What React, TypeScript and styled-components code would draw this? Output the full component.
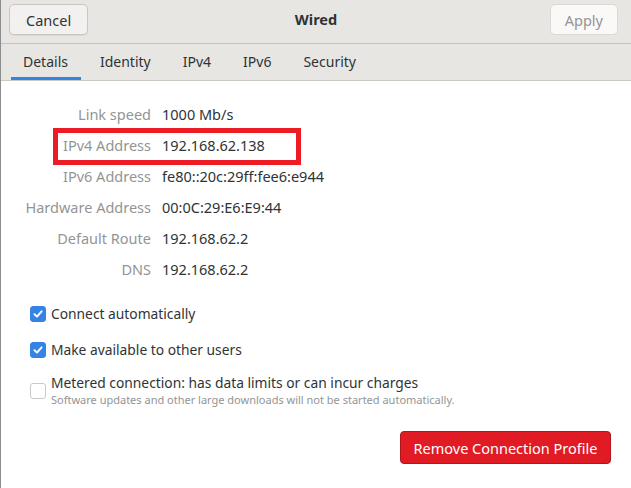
import React from "react";
import styled, { createGlobalStyle } from "styled-components";

const GlobalStyle = createGlobalStyle`
  html, body {
    margin: 0;
    padding: 0;
    background: #ffffff;
  }
  body {
    font-family: "Noto Sans", "Open Sans", sans-serif;
    color: #2e3436;
  }
`;

const rows = [
  { label: "Link speed", value: "1000 Mb/s" },
  { label: "IPv4 Address", value: "192.168.62.138", marked: true },
  { label: "IPv6 Address", value: "fe80::20c:29ff:fee6:e944" },
  { label: "Hardware Address", value: "00:0C:29:E6:E9:44" },
  { label: "Default Route", value: "192.168.62.2" },
  { label: "DNS", value: "192.168.62.2" },
];

const tabs = ["Details", "Identity", "IPv4", "IPv6", "Security"];

export default function App() {
  return (
    <>
      <GlobalStyle />
      <Window>
        <HeaderBar>
          <HeaderButton>Cancel</HeaderButton>
          <Title>Wired</Title>
          <HeaderButton disabled>Apply</HeaderButton>
        </HeaderBar>

        <TabBar>
          {tabs.map((t, i) => (
            <Tab key={t} $active={i === 0}>
              {t}
            </Tab>
          ))}
        </TabBar>

        <Content>
          <InfoGrid>
            {rows.map((r) => (
              <InfoRow key={r.label} $marked={r.marked}>
                <Label>{r.label}</Label>
                <Value>{r.value}</Value>
              </InfoRow>
            ))}
          </InfoGrid>

          <Options>
            <Option>
              <Check checked />
              <OptionText>Connect automatically</OptionText>
            </Option>
            <Option>
              <Check checked />
              <OptionText>Make available to other users</OptionText>
            </Option>
            <Option>
              <Check />
              <div>
                <OptionText $compact>
                  Metered connection: has data limits or can incur charges
                </OptionText>
                <OptionHint>
                  Software updates and other large downloads will not be started automatically.
                </OptionHint>
              </div>
            </Option>
          </Options>

          <Footer>
            <DangerButton>Remove Connection Profile</DangerButton>
          </Footer>
        </Content>
      </Window>
    </>
  );
}

function Check({ checked }: { checked?: boolean }) {
  return (
    <CheckBox $checked={checked}>
      {checked && (
        <svg width="12" height="12" viewBox="0 0 12 12">
          <path
            d="M2.5 6.2 L5 8.6 L9.6 3.4"
            fill="none"
            stroke="#ffffff"
            strokeWidth="2"
            strokeLinecap="round"
            strokeLinejoin="round"
          />
        </svg>
      )}
    </CheckBox>
  );
}

const Window = styled.div`
  width: 631px;
  height: 488px;
  display: flex;
  flex-direction: column;
  background: #ffffff;
  border-left: 1px solid #8b8e8f;
  box-sizing: border-box;
  overflow: hidden;
`;

const HeaderBar = styled.div`
  height: 39px;
  flex: none;
  display: grid;
  grid-template-columns: 1fr auto 1fr;
  align-items: start;
  padding: 4px 13px 0 8px;
  background: #e8e6e3;
  border-bottom: 1px solid #c7c2bd;
  box-sizing: content-box;

  & > button:last-child {
    justify-self: end;
  }
  & > button:first-child {
    justify-self: start;
  }
`;

const HeaderButton = styled.button`
  height: 31px;
  padding: 0 ${(p) => (p.disabled ? "14px" : "16px")};
  border-radius: 5px;
  border: 1px solid ${(p) => (p.disabled ? "#dcd8d4" : "#cdc7c2")};
  background: ${(p) => (p.disabled ? "#faf9f8" : "#f2f1ef")};
  color: ${(p) => (p.disabled ? "#939595" : "#2e3436")};
  font-family: inherit;
  font-size: 14.5px;
  box-shadow: ${(p) => (p.disabled ? "none" : "0 1px 0 rgba(0,0,0,0.06)")};
`;

const Title = styled.div`
  font-weight: 700;
  font-size: 14.5px;
  line-height: 31px;
  padding-left: 5px;
  color: #2e3436;
`;

const TabBar = styled.div`
  height: 36px;
  flex: none;
  display: flex;
  gap: 7px;
  padding-left: 10px;
  background: #e8e6e3;
  border-bottom: 1px solid #cdc7c2;
`;

const Tab = styled.div<{ $active?: boolean }>`
  display: flex;
  align-items: center;
  padding: 0 13px 1px 12px;
  font-size: 14px;
  color: #2e3436;
  box-shadow: ${(p) => (p.$active ? "inset 0 -3px 0 #3584e4" : "none")};
`;

const Content = styled.div`
  flex: 1;
  display: flex;
  flex-direction: column;
  padding: 17px 20px 0 20px;
`;

const InfoGrid = styled.div`
  display: flex;
  flex-direction: column;
`;

const InfoRow = styled.div<{ $marked?: boolean }>`
  display: grid;
  grid-template-columns: 130px auto;
  column-gap: 11px;
  align-items: center;
  height: 31px;
  font-size: 14.5px;
  position: relative;

  ${(p) =>
    p.$marked &&
    `
    &::after {
      content: "";
      position: absolute;
      left: 32px;
      top: -1px;
      width: 238px;
      height: 27px;
      border: 5px solid #ed1c24;
    }
  `}
`;

const Label = styled.div`
  text-align: right;
  color: #939595;
  white-space: nowrap;
`;

const Value = styled.div`
  color: #2e3436;
  white-space: nowrap;
`;

const Options = styled.div`
  display: flex;
  flex-direction: column;
  gap: 13px;
  margin-top: 18px;
  padding-left: 9px;
`;

const Option = styled.div`
  display: flex;
  align-items: center;
  gap: 5px;
  font-size: 13.8px;
`;

const CheckBox = styled.div<{ $checked?: boolean }>`
  width: 16px;
  height: 16px;
  flex: none;
  box-sizing: border-box;
  border-radius: 3px;
  display: flex;
  align-items: center;
  justify-content: center;
  background: ${(p) => (p.$checked ? "#3584e4" : "#ffffff")};
  border: 1px solid ${(p) => (p.$checked ? "#3584e4" : "#cdc7c2")};
`;

const OptionText = styled.div<{ $compact?: boolean }>`
  color: #2e3436;
  line-height: ${(p) => (p.$compact ? "18px" : "23px")};
`;

const OptionHint = styled.div`
  font-size: 11px;
  color: #939595;
  line-height: 16px;
`;

const Footer = styled.div`
  display: flex;
  justify-content: flex-end;
  margin-top: 23px;
`;

const DangerButton = styled.button`
  width: 211px;
  height: 33px;
  border-radius: 4px;
  border: 1px solid #b2161d;
  background: #e01b24;
  color: #ffffff;
  font-family: inherit;
  font-size: 14.5px;
`;
